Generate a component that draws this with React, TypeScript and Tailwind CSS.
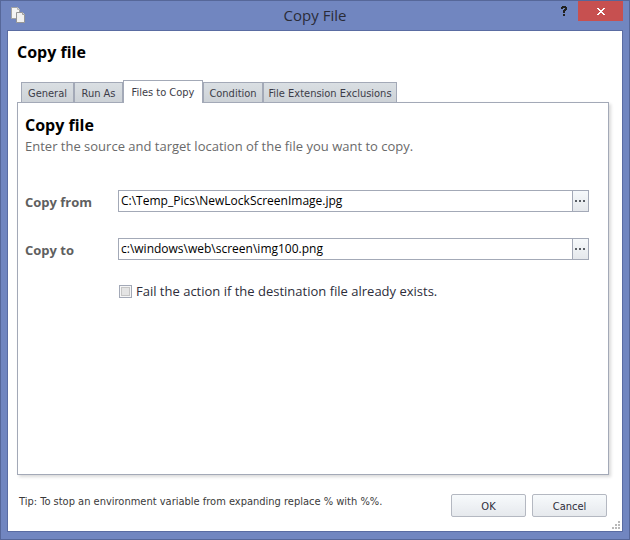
import { useState } from "react";

const TABS = [
  { name: "General", width: "min-w-[53px]" },
  { name: "Run As", width: "min-w-[49px]" },
  { name: "Files to Copy", width: "min-w-[80px]" },
  { name: "Condition", width: "min-w-[60px]" },
  { name: "File Extension Exclusions", width: "min-w-[134px]" },
];

const smallFont = "font-['DejaVu_Sans_Condensed','Open_Sans',sans-serif] text-[11px] leading-4";

function FilesIcon() {
  return (
    <svg width="16" height="17" viewBox="0 0 16 17" aria-hidden="true">
      <path d="M1.500 .5h6l2 2v9h-8z" fill="#f4f4f4" stroke="#a3a3a3" />
      <path d="M7.500 .5v2h2" fill="#fff" stroke="#b5b5b5" />
      <path d="M6.500 5.500h6l2 2v8h-8z" fill="#f0f0f0" stroke="#969696" />
      <path d="M12.500 5.500v2h2" fill="#fff" stroke="#9c9c9c" />
    </svg>
  );
}

function CloseIcon() {
  return (
    <svg width="8" height="7" viewBox="0 0 8 7" fill="#fff" shapeRendering="crispEdges" aria-hidden="true">
      <path d="M0 0h2v1h1v1h2v-1h1v-1h2v1h-1v1h-1v1h-1v1h1v1h1v1h1v1h-2v-1h-1v-1h-2v1h-1v1h-2v-1h1v-1h1v-1h1v-1h-1v-1h-1v-1h-1z" />
    </svg>
  );
}

function HelpIcon() {
  return (
    <svg width="6" height="10" viewBox="0 0 6 10" fill="#222" shapeRendering="crispEdges" aria-hidden="true">
      <path d="M1 0h4v1h1v3h-1v1h-1v2h-2v-3h1v-1h1v-1h-2v1h-2v-2h1zM2 8h2v2h-2z" />
    </svg>
  );
}

function DotsIcon() {
  return (
    <svg width="10" height="2" viewBox="0 0 10 2" fill="#5a5f66" shapeRendering="crispEdges" aria-hidden="true">
      <path d="M0 0h2v2h-2zM4 0h2v2h-2zM8 0h2v2h-2z" />
    </svg>
  );
}

function GripIcon() {
  return (
    <svg width="8" height="8" viewBox="0 0 8 8" fill="#b9b9b9" shapeRendering="crispEdges" aria-hidden="true">
      <path d="M6 0h2v2h-2zM3 3h2v2h-2zM6 3h2v2h-2zM0 6h2v2h-2zM3 6h2v2h-2zM6 6h2v2h-2z" />
    </svg>
  );
}

function PathField({ id, label, value }: { id: string; label: string; value: string }) {
  return (
    <div className="flex items-center">
      <label htmlFor={id} className="w-[93px] shrink-0 pt-[2px] text-[13px] leading-4 font-bold text-[#5f5f5f]">
        {label}
      </label>
      <div className="flex h-[22px] min-w-0 flex-1 border border-[#a3a9b7]">
        <input
          id={id}
          defaultValue={value}
          className="min-w-0 flex-1 bg-white px-[2px] text-[12px] leading-5 text-black outline-none"
        />
        <button
          type="button"
          aria-label={`Browse for ${label}`}
          className="flex w-4 items-center justify-center border-l border-[#a3a9b7] bg-linear-to-b from-[#f6f9fb] to-[#e5e8ec] pr-px"
        >
          <DotsIcon />
        </button>
      </div>
    </div>
  );
}

export default function App() {
  const [active, setActive] = useState("Files to Copy");
  const dialogButton =
    "h-[23px] w-[75px] rounded-[2px] border border-[#b4b8c1] bg-linear-to-b from-[#f7fafc] to-[#e6e9ed] pt-[2px] text-[#2d2d3a]";

  return (
    <div className="flex min-h-screen flex-col border border-[#566799] bg-[#7186c0] font-['Open_Sans','Noto_Sans',sans-serif]">
      <header className="grid h-[29px] grid-cols-[1fr_auto_1fr] items-start">
        <div className="pt-[6px] pl-[9px]">
          <FilesIcon />
        </div>
        <h1 className="pt-[3px] text-[15px] leading-[22px] text-[#2a2c38]">Copy File</h1>
        <div className="flex justify-end pr-[6px]">
          <button type="button" aria-label="Help" className="flex h-5 w-7 items-center justify-center">
            <HelpIcon />
          </button>
          <button type="button" aria-label="Close" className="flex h-5 w-[45px] items-center justify-center bg-[#c75050]">
            <CloseIcon />
          </button>
        </div>
      </header>

      <main className="mx-[6px] mb-[7px] flex flex-1 flex-col border border-[#5a6ca2] bg-white">
        <h2 className="px-[9px] pt-[11px] text-[16px] leading-5 font-bold text-black">Copy file</h2>

        <div role="tablist" className={`${smallFont} z-10 mt-[18px] -mb-px flex items-end pl-[13px] text-[#3c3c48]`}>
          {TABS.map((tab) => (
            <button
              key={tab.name}
              type="button"
              role="tab"
              aria-selected={tab.name === active}
              onClick={() => setActive(tab.name)}
              className={`${tab.width} border-[#a3a9b7] pt-[2px] whitespace-nowrap ${
                tab.name === active
                  ? "h-[23px] border-x border-t bg-white"
                  : "h-[21px] border bg-linear-to-b from-[#dadfe3] to-[#cdd2d7]"
              }`}
            >
              {tab.name}
            </button>
          ))}
        </div>

        <section className="mr-[13px] ml-[9px] flex-1 border border-[#a3a9b7] bg-white pr-[19px] pl-[7px] shadow-[2px_2px_3px_rgba(0,0,0,0.15)]">
          <h3 className="pt-3 text-[16px] leading-5 font-bold text-black">Copy file</h3>
          <p className="pt-[3px] text-[13px] leading-4 text-[#6a6a6a]">
            Enter the source and target location of the file you want to copy.
          </p>
          <div className="mt-9 flex flex-col gap-[26px]">
            <PathField id="from" label="Copy from" value="C:\Temp_Pics\NewLockScreenImage.jpg" />
            <PathField id="to" label="Copy to" value="c:\windows\web\screen\img100.png" />
          </div>
          <div className="mt-[23px] flex items-center gap-1 pl-[94px]">
            <input
              id="fail"
              type="checkbox"
              className="size-[13px] appearance-none border border-[#a3a9b7] bg-[#e4e4e4] shadow-[inset_0_0_0_1px_#f6f6f6,inset_0_0_0_2px_#c6c6c6] checked:bg-[#5a5f66]"
            />
            <label htmlFor="fail" className="text-[13px] leading-4 text-[#2d2d3a]">
              Fail the action if the destination file already exists.
            </label>
          </div>
        </section>

        <footer className={`${smallFont} flex items-start pt-[19px] pl-[11px]`}>
          <p className="flex-1 text-[#3a3a3a]">
            Tip: To stop an environment variable from expanding replace % with %%.
          </p>
          <div className="flex gap-[6px] pr-[15px]">
            <button type="button" className={dialogButton}>OK</button>
            <button type="button" className={dialogButton}>Cancel</button>
          </div>
        </footer>
        <div className="mt-1 flex justify-end pr-[2px] pb-[2px]">
          <GripIcon />
        </div>
      </main>
    </div>
  );
}
